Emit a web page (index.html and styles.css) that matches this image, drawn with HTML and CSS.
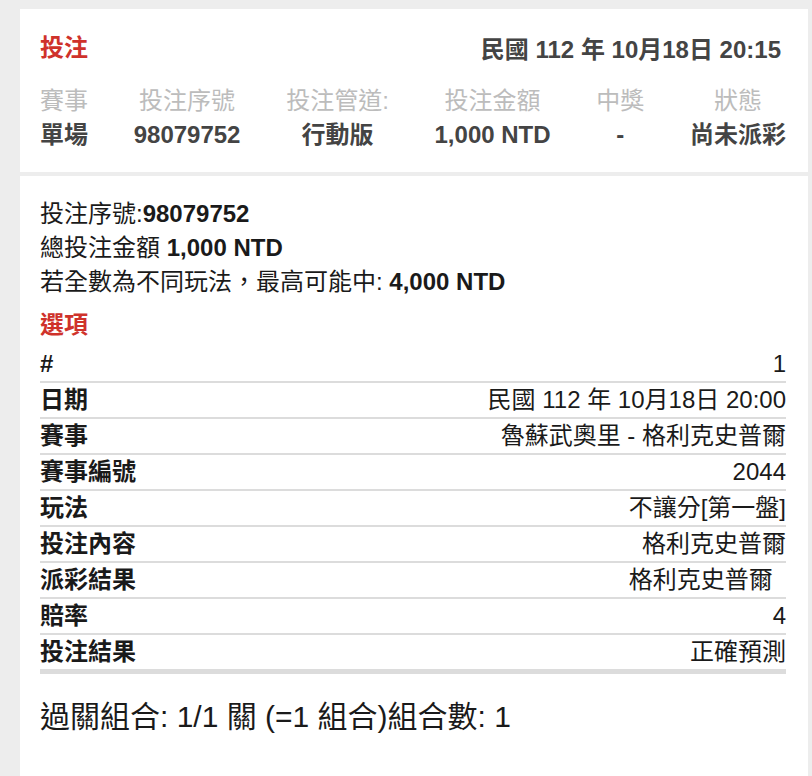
FILE: index.html
```html
<!DOCTYPE html>
<html lang="zh-Hant">
<head>
    <meta charset="UTF-8">
    <meta name="viewport" content="width=device-width, initial-scale=1.0">
    <title>投注</title>
    <link rel="stylesheet" href="styles.css">
</head>
<body>
    <div class="card summary">
        <div class="summary-head">
            <span class="title">投注</span>
            <span class="bet-date">民國 112 年 10月18日 20:15</span>
        </div>
        <div class="summary-cols">
            <div class="col">
                <span class="col-label">賽事</span>
                <span class="col-value">單場</span>
            </div>
            <div class="col">
                <span class="col-label">投注序號</span>
                <span class="col-value">98079752</span>
            </div>
            <div class="col">
                <span class="col-label">投注管道:</span>
                <span class="col-value">行動版</span>
            </div>
            <div class="col">
                <span class="col-label">投注金額</span>
                <span class="col-value">1,000 NTD</span>
            </div>
            <div class="col">
                <span class="col-label">中獎</span>
                <span class="col-value">-</span>
            </div>
            <div class="col">
                <span class="col-label">狀態</span>
                <span class="col-value">尚未派彩</span>
            </div>
        </div>
    </div>

    <div class="card detail">
        <p class="info">投注序號:<b>98079752</b></p>
        <p class="info">總投注金額 <b>1,000 NTD</b></p>
        <p class="info">若全數為不同玩法，最高可能中: <b>4,000 NTD</b></p>
        <h2 class="title section-title">選項</h2>

        <table class="options">
            <tr><th>#</th><td>1</td></tr>
            <tr><th>日期</th><td>民國 112 年 10月18日 20:00</td></tr>
            <tr><th>賽事</th><td>魯蘇武奧里 - 格利克史普爾</td></tr>
            <tr><th>賽事編號</th><td>2044</td></tr>
            <tr><th>玩法</th><td>不讓分[第一盤]</td></tr>
            <tr><th>投注內容</th><td>格利克史普爾</td></tr>
            <tr><th>派彩結果</th><td>格利克史普爾&nbsp;&nbsp;</td></tr>
            <tr><th>賠率</th><td>4</td></tr>
            <tr><th>投注結果</th><td>正確預測</td></tr>
        </table>

        <p class="combo">過關組合: 1/1 關 (=1 組合)組合數: 1</p>
    </div>
</body>
</html>
```

FILE: styles.css
```css
html, body {
    height: 100%;
}

body {
    margin: 0;
    background-color: #ededed;
    font-family: "Liberation Sans", "Noto Sans CJK TC", sans-serif;
    color: #1a1a1a;
    padding: 9px 4px 0 20px;
    box-sizing: border-box;
    display: flex;
    flex-direction: column;
    gap: 4px;
}

.card {
    background-color: #ffffff;
}

.title {
    color: #cf322b;
    font-size: 24px;
    font-weight: bold;
    line-height: 34px;
}

/* top summary card */
.summary {
    padding: 21px 22px 20px 20px;
}

.summary-head {
    display: flex;
    justify-content: space-between;
    align-items: center;
}

.bet-date {
    color: #444;
    font-size: 24px;
    font-weight: bold;
    padding-right: 5px;
}

.summary-cols {
    display: flex;
    justify-content: space-between;
    margin-top: 19px;
}

.col {
    display: flex;
    flex-direction: column;
    align-items: center;
    font-size: 24px;
    line-height: 34px;
}

.col-label {
    color: #bcbcbc;
}

.col-value {
    color: #444;
    font-weight: bold;
}

/* detail card */
.detail {
    flex: 1;
    padding: 21px 22px 20px 20px;
}

.info {
    margin: 0;
    font-size: 24px;
    line-height: 34px;
}

.section-title {
    margin: 9px 0 5px;
}

.options {
    width: 100%;
    border-collapse: collapse;
    font-size: 24px;
    line-height: 34px;
}

.options th,
.options td {
    height: 34px;
    padding: 0;
    border-bottom: 2px solid #dcdcdc;
    white-space: nowrap;
}

.options th {
    text-align: left;
    font-weight: bold;
}

.options td {
    text-align: right;
}

.options tr:last-child th,
.options tr:last-child td {
    border-bottom: 5px solid #dcdcdc;
}

.combo {
    margin: 25px 0 0;
    font-size: 30px;
    line-height: 36px;
}
```
